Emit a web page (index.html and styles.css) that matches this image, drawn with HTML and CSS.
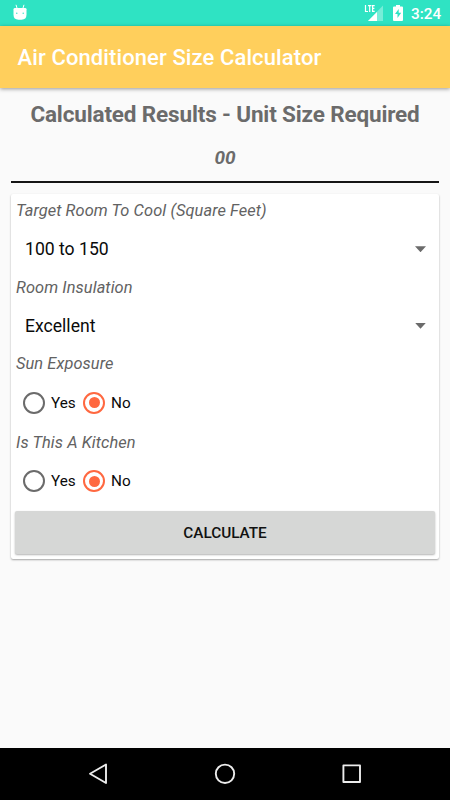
FILE: index.html
```html
<!DOCTYPE html>
<html lang="en">
<head>
<meta charset="utf-8">
<title>Air Conditioner Size Calculator</title>
<link rel="stylesheet" href="styles.css">
</head>
<body>
<div class="screen">
  <div class="status">
    <svg class="droid" width="14" height="17" viewBox="0 0 14 17"><path d="M3 .8 4 4M11 .8 10 4" stroke="#fff" stroke-width="1"/><path d="M.5 5.3Q.5 4 2 4H12Q13.500 4 13.500 5.300V10.500Q13.500 15.700 8.500 15.700H5.500Q.5 15.700 .5 10.500Z" fill="#fff"/><circle cx="3.800" cy="9.300" r=".7" fill="#2fe3c3"/><circle cx="10.200" cy="9.300" r=".7" fill="#2fe3c3"/></svg>
    <div class="status-right">
      <svg class="signal" width="20" height="17" viewBox="0 0 20 17"><path d="M19 1.500V17H4Z" fill="#fff" fill-opacity=".35"/><path d="M13 8V17H4Z" fill="#fff"/><path d="M1.500 1V7.500H4M4 1.700H7.500M5.700 1V8M10.700 1.700H8.600V7.300H10.700M8.600 4.400H10.400" fill="none" stroke="#2fe3c3" stroke-width="2.800"/><path d="M1.500 1V7.500H4M4 1.700H7.500M5.700 1V8M10.700 1.700H8.600V7.300H10.700M8.600 4.400H10.400" fill="none" stroke="#fff" stroke-width="1.200"/></svg>
      <svg class="battery" width="10" height="16" viewBox="0 0 10 16"><path d="M3 0H7V1.500H9Q10 1.500 10 2.500V15Q10 16 9 16H1Q0 16 0 15V2.500Q0 1.500 1 1.500H3Z" fill="#fff"/><path d="M5.700 4 2 9H4.500V13L8.200 7.800H5.700Z" fill="#2fe3c3"/></svg>
      <span class="clock">3:24</span>
    </div>
  </div>
  <header class="appbar"><h1>Air Conditioner Size Calculator</h1></header>
  <main>
    <h2>Calculated Results - Unit Size Required</h2>
    <div class="result">00</div>
    <section class="card">
      <div class="label l1">Target Room To Cool (Square Feet)</div>
      <div class="spinner"><span>100 to 150</span><i class="caret"></i></div>
      <div class="label">Room Insulation</div>
      <div class="spinner"><span>Excellent</span><i class="caret"></i></div>
      <div class="label">Sun Exposure</div>
      <div class="radios">
        <i class="radio"></i><span class="yes">Yes</span><i class="radio on"></i><span>No</span>
      </div>
      <div class="label l4">Is This A Kitchen</div>
      <div class="radios">
        <i class="radio"></i><span class="yes">Yes</span><i class="radio on"></i><span>No</span>
      </div>
      <button type="button">CALCULATE</button>
    </section>
  </main>
  <nav>
    <svg width="450" height="52" viewBox="0 0 450 52" fill="none" stroke="#ececec" stroke-width="1.900" stroke-linejoin="round"><path d="M106 16.500V35L90 25.800Z"/><circle cx="225" cy="25.800" r="9.200"/><rect x="343.400" y="17.400" width="16.600" height="16.600"/></svg>
  </nav>
</div>
</body>
</html>
```
FILE: styles.css
```css
* { box-sizing: border-box; }
body { margin: 0; font-family: Roboto, sans-serif; background: #fafafa; }
.screen { width: 450px; height: 800px; display: flex; flex-direction: column; overflow: hidden; }
.status { height: 26px; flex: none; background: #2fe3c3; display: flex; justify-content: space-between; padding: 4px 9px 0 13px; }
.status-right { display: flex; align-items: flex-start; }
.signal { margin-right: 9px; }
.battery { margin: 1px 8px 0 0; }
.clock { font-size: 15.3px; font-weight: 500; line-height: 20px; color: #fff; width: 30px; white-space: nowrap; }
.appbar { height: 62px; flex: none; background: #ffcf5c; padding-left: 17.6px; box-shadow: 0 1px 4px rgba(0,0,0,.4); }
h1 { margin: 0; font-size: 22px; letter-spacing: .1px; font-weight: 500; line-height: 64px; color: #fff; white-space: nowrap; }
main { flex: 1; padding: 0 11px; }
h2 { margin: 13px 0 0; height: 26px; font-size: 22.5px; letter-spacing: -.15px; line-height: 26px; font-weight: 700; color: #6b6b6b; text-align: center; white-space: nowrap; }
.result { height: 56px; padding-top: 19px; font-size: 19px; line-height: 24px; font-weight: 700; font-style: italic; color: #6b6b6b; text-align: center; border-bottom: 2px solid #151515; }
.card { margin-top: 11px; height: 365px; background: #fff; border-radius: 2px; box-shadow: 0 1px 2px rgba(0,0,0,.35); padding: 0 4px; display: flex; flex-direction: column; }
.card > * { flex: none; }
.label { font-size: 16.4px; letter-spacing: .08px; line-height: 20px; font-style: italic; color: #626262; padding-left: 1px; white-space: nowrap; }
.l1 { margin-top: 7px; }
.l4 { margin-top: 1px; }
.spinner { height: 56.5px; display: flex; justify-content: space-between; align-items: center; padding: 0 9px 0 10px; font-size: 17.6px; color: #0a0a0a; }
.caret { width: 11px; height: 6px; background: #6b6b6b; clip-path: polygon(0 0, 100% 0, 50% 100%); }
.radios { height: 57.5px; display: flex; align-items: center; padding-left: 8px; font-size: 15.3px; color: #0a0a0a; }
.radio { width: 22px; height: 22px; border: 2px solid #6b6b6b; border-radius: 50%; margin-right: 6px; display: flex; flex: none; }
.radio.on { border-color: #ff6840; }
.radio.on::after { content: ""; width: 11px; height: 11px; border-radius: 50%; background: #ff6840; margin: auto; }
.yes { width: 32px; }
button { margin: 1px 0 0; height: 43px; border: 0; border-radius: 2px; background: #d6d7d6; box-shadow: 0 1px 2px rgba(0,0,0,.3); font: 500 15.3px Roboto, sans-serif; color: #111; }
nav { height: 52px; flex: none; background: #000; }
nav svg { display: block; }
```
